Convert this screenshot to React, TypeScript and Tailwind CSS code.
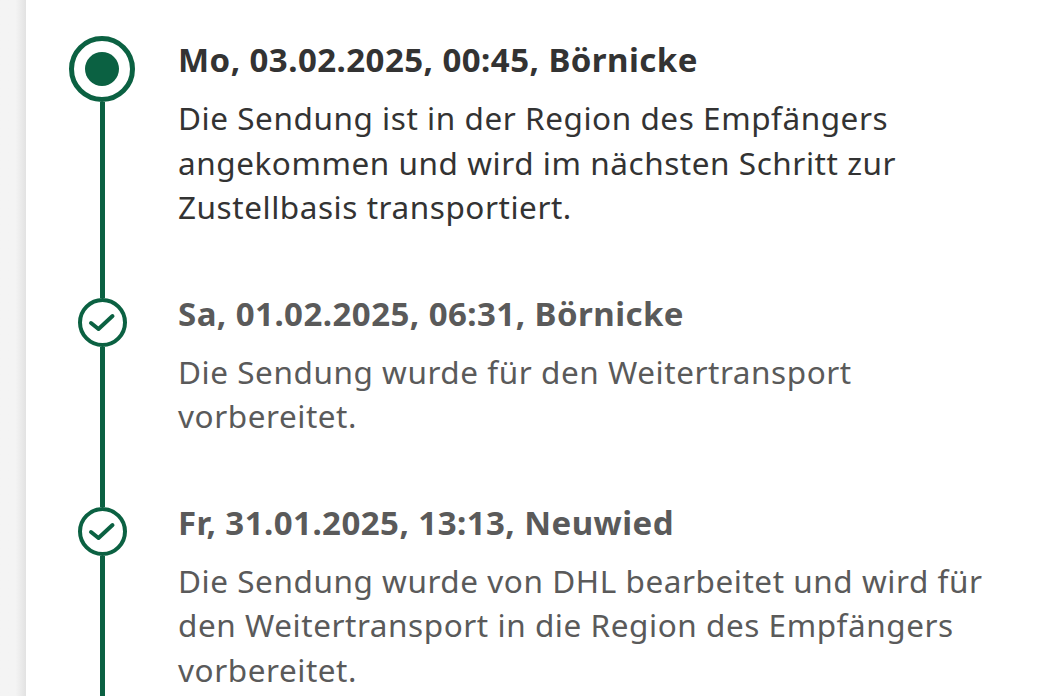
import React from "react"

type Event = {
  title: string
  text: string
  current?: boolean
}

const events: Event[] = [
  {
    title: "Mo, 03.02.2025, 00:45, Börnicke",
    text: "Die Sendung ist in der Region des Empfängers angekommen und wird im nächsten Schritt zur Zustellbasis transportiert.",
    current: true,
  },
  {
    title: "Sa, 01.02.2025, 06:31, Börnicke",
    text: "Die Sendung wurde für den Weitertransport vorbereitet.",
  },
  {
    title: "Fr, 31.01.2025, 13:13, Neuwied",
    text: "Die Sendung wurde von DHL bearbeitet und wird für den Weitertransport in die Region des Empfängers vorbereitet.",
  },
]

function CurrentDot() {
  return (
    <div className="w-[66px] h-[66px] shrink-0 rounded-full border-[5px] border-[#0b6142] bg-white flex items-center justify-center">
      <div className="w-[34px] h-[34px] rounded-full bg-[#0b6142]" />
    </div>
  )
}

function DoneDot() {
  return (
    <div className="w-[49px] h-[49px] shrink-0 rounded-full border-[4px] border-[#0b6142] bg-white flex items-center justify-center">
      <svg width="30" height="22" viewBox="0 0 30 22" fill="none">
        <path
          d="M4 12 L11.5 18 L25.5 5"
          stroke="#0b6142"
          strokeWidth="4"
          strokeLinecap="round"
          strokeLinejoin="round"
        />
      </svg>
    </div>
  )
}

export default function App() {
  return (
    <div
      className="h-[696px] overflow-hidden flex bg-white"
      style={{ fontFamily: '"Noto Sans", "Open Sans", Arial, sans-serif' }}
    >
      {/* side rail */}
      <div className="w-[26px] shrink-0 bg-linear-to-r from-[#f4f4f4] from-60% to-[#e2e2e2]" />

      <main className="flex-1 pt-[36px] pr-[44px]">
        {events.map((ev, i) => (
          <div key={i} className="flex">
            {/* timeline column */}
            <div className="w-[152px] shrink-0 flex flex-col items-center">
              {ev.current ? (
                <CurrentDot />
              ) : (
                <>
                  <div className="w-[5px] h-[4px] bg-[#0b6142]" />
                  <DoneDot />
                </>
              )}
              <div className="w-[5px] flex-1 bg-[#0b6142]" />
            </div>

            {/* content */}
            <div className={`flex-1 ${ev.current ? "pt-[4px]" : "pt-0"} pb-[64px]`}>
              <h3
                className={`text-[33px] leading-[40px] font-bold tracking-[0.45px] ${
                  ev.current ? "text-[#333333]" : "text-[#5a5a5a]"
                }`}
              >
                {ev.title}
              </h3>
              <p
                className={`mt-[16px] text-[31.5px] leading-[44.5px] tracking-[0.55px] ${
                  ev.current ? "text-[#333333]" : "text-[#5a5a5a]"
                }`}
              >
                {ev.text}
              </p>
            </div>
          </div>
        ))}
      </main>
    </div>
  )
}
